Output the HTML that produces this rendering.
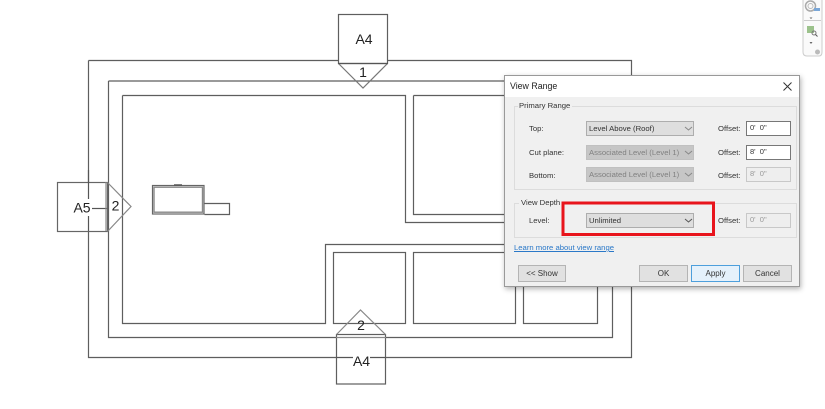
<!DOCTYPE html>
<html><head><meta charset="utf-8"><style>
html,body{margin:0;padding:0;background:#fff}
#p{position:relative;width:825px;height:409px;overflow:hidden;background:#fff;font-family:"Liberation Sans",sans-serif}
#p svg{position:absolute;left:0;top:0}
.t{position:absolute;font-size:7.7px;color:#333;line-height:11px;white-space:nowrap}
.s{position:absolute;height:15px;background:#dedede;border:1px solid #adadad;box-sizing:border-box;left:586px;width:108px;font-size:7.7px;line-height:13px;color:#333;padding-left:2px;white-space:nowrap}
.s.d{background:#c6c6c6;border-color:#c0c0c0;color:#808080}
.o{position:absolute;left:746px;width:45px;height:15px;box-sizing:border-box;background:#fff;border:1px solid #777;font-size:7.5px;line-height:12px;color:#333;padding-left:3px}
.o.d{background:#eee;border-color:#c8c8c8;color:#999}
.b{position:absolute;top:265px;height:17px;box-sizing:border-box;background:#e1e1e1;border:1px solid #b4b4b4;font-size:8px;line-height:15px;text-align:center;color:#333}
.g{position:absolute;border:1px solid #dcdcdc;box-sizing:border-box}
#dlg{position:absolute;left:0;top:0;width:825px;height:409px;filter:blur(.3px)}
</style></head><body><div id="p">
<svg width="825" height="409" viewBox="0 0 825 409" fill="none" stroke="#5e5e5e" stroke-width="1.2" style="filter:blur(.3px)">
<path d="M88.5 60.5H631.5V357.5H370M353 357.5H88.5V215M88.5 200V60.500"/>
<path d="M108.5 81H612.5V337.5H108.500V81"/>
<path d="M122.5 95.500H405.500V222.500H520M520 244.500H325.500V323.500H122.500V95.500"/>
<path d="M413.500 95.500H510M510 214.500H413.500V95.500"/>
<rect x="333.500" y="252.500" width="72" height="71"/>
<rect x="413.500" y="252.500" width="102" height="71"/>
<rect x="523.500" y="252.500" width="74" height="71"/>
<rect x="152.500" y="185.500" width="51.500" height="28.500" stroke="#666"/>
<rect x="154" y="187.200" width="48.500" height="25" stroke="#888" stroke-width="1.400"/>
<path d="M174 185H182" stroke="#555" stroke-width="1.500"/>
<path d="M204.500 203.500H229.500V214.500H204.500"/>
<rect x="338.500" y="14.500" width="49" height="49" fill="#fff"/>
<path d="M338.500 63.500L363 88L387.500 63.500" stroke="#777"/>
<path d="M338 63.500H388" stroke="#555"/>
<rect x="57.500" y="182.500" width="50" height="49" fill="#fff" stroke="#666"/>
<path d="M88.500 170V199M88.500 216V231" stroke="#555"/>
<path d="M92 208.500H107.500" stroke="#555"/>
<path d="M107.500 182.500L131 206.500L107.500 231.500" stroke="#888"/>
<path d="M106 182V231" stroke="#888"/>
<rect x="336.500" y="334.500" width="49" height="49.500" fill="#fff"/>
<path d="M336.500 334.500L360.500 310L385.500 334.500" stroke="#888"/>
<path d="M336 337.500H386" stroke="#888"/>
<path d="M336.500 357.500H353M370 357.500H385.500" stroke="#555"/>
<text x="364" y="44" font-size="14" fill="#222" stroke="none" text-anchor="middle" font-family="Liberation Sans">A4</text>
<text x="363" y="77" font-size="14" fill="#222" stroke="none" text-anchor="middle" font-family="Liberation Sans">1</text>
<text x="82" y="212.500" font-size="14" fill="#222" stroke="none" text-anchor="middle" font-family="Liberation Sans">A5</text>
<text x="115.500" y="210.500" font-size="14" fill="#222" stroke="none" text-anchor="middle" font-family="Liberation Sans">2</text>
<text x="361" y="330" font-size="14" fill="#222" stroke="none" text-anchor="middle" font-family="Liberation Sans">2</text>
<text x="361.500" y="366" font-size="14" fill="#222" stroke="none" text-anchor="middle" font-family="Liberation Sans">A4</text>
<path d="M803 0V52Q803 56 807 56H819Q822 56 822 52V0" stroke="#ccc" fill="#fafafa" stroke-width="1"/>
<path d="M804 20.500H821" stroke="#ccc" stroke-width="1"/>
<circle cx="810.500" cy="6" r="5" stroke="#aaa" stroke-width="1.500"/>
<circle cx="810.500" cy="6" r="2.500" stroke="#bbb" stroke-width="1"/>
<rect x="814" y="8" width="6" height="3" fill="#7aa7d8" stroke="none"/>
<path d="M809.500 17.500H812.500L811 19Z" fill="#666" stroke="none"/>
<rect x="807" y="26" width="7" height="7" fill="#9cc28c" stroke="none"/>
<circle cx="814" cy="33" r="2" stroke="#777" stroke-width="1"/>
<path d="M815.500 34.500L817.500 36.500" stroke="#555" stroke-width="1"/>
<path d="M809.500 42H812.500L811 44Z" fill="#666" stroke="none"/>
<circle cx="817.500" cy="52" r="2.500" fill="#bbb" stroke="none"/>
</svg>
<div id="dlg">
<div style="position:absolute;left:504px;top:75px;width:296px;height:212px;background:#f0f0f0;border:1px solid #999;box-sizing:border-box;box-shadow:1px 2px 5px rgba(0,0,0,.3)"></div>
<div style="position:absolute;left:505px;top:76px;width:294px;height:21px;background:#fff"></div>
<div class="t" style="left:510px;top:81px;font-size:8.800px;color:#222">View Range</div>
<svg width="825" height="409" fill="none" stroke="#333"><path d="M783.500 82.500L791.500 90.500M791.500 82.500L783.500 90.500"/></svg>
<div class="g" style="left:514px;top:106px;width:283px;height:84px"></div>
<div class="t" style="left:518px;top:100px;background:#f0f0f0;padding:0 2px 0 1px">Primary Range</div>
<div class="t" style="left:529px;top:123px">Top:</div>
<div class="s" style="top:121px">Level Above (Roof)</div>
<div class="t" style="left:718px;top:123px">Offset:</div>
<div class="o" style="top:121px">0'&nbsp; 0"</div>
<div class="t" style="left:529px;top:147px">Cut plane:</div>
<div class="s d" style="top:145px">Associated Level (Level 1)</div>
<div class="t" style="left:718px;top:147px">Offset:</div>
<div class="o" style="top:145px">8'&nbsp; 0"</div>
<div class="t" style="left:529px;top:170px">Bottom:</div>
<div class="s d" style="top:167px">Associated Level (Level 1)</div>
<div class="t" style="left:718px;top:170px">Offset:</div>
<div class="o d" style="top:167px">8'&nbsp; 0"</div>
<div class="g" style="left:514px;top:203px;width:283px;height:35px"></div>
<div class="t" style="left:519px;top:197px;background:#f0f0f0;padding:0 2px">View Depth</div>
<div class="t" style="left:529px;top:215px">Level:</div>
<div class="s" style="top:213px">Unlimited</div>
<div class="t" style="left:718px;top:215px">Offset:</div>
<div class="o d" style="top:213px">0'&nbsp; 0"</div>
<svg width="825" height="409" fill="none" stroke="#555"><path d="M685 127L688.500 130L692 127M685 151L688.500 154L692 151M685 173L688.500 176L692 173" stroke="#888"/><path d="M685 219L688.500 222L692 219"/><rect x="563" y="203" width="150.500" height="31.500" stroke="#e8141c" stroke-width="3"/></svg>
<div class="t" style="left:514px;top:242px;color:#2a78c8;text-decoration:underline">Learn more about view range</div>
<div class="b" style="left:518px;width:48px">&lt;&lt; Show</div>
<div class="b" style="left:639px;width:49px">OK</div>
<div class="b" style="left:691px;width:49px;background:#e5f1fb;border-color:#4d9fdc">Apply</div>
<div class="b" style="left:743px;width:49px">Cancel</div>
</div>
</div></body></html>
